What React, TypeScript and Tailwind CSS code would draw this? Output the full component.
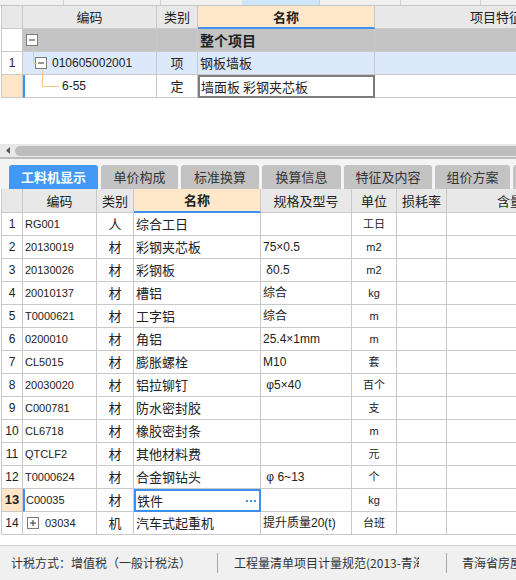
import React from 'react';

const cjk = "font-['Noto_Sans_CJK_SC',sans-serif]";
const latin = "font-['Liberation_Sans','Noto_Sans_CJK_SC',sans-serif]";

const rows: string[][] = [
    ['1', 'RG001', '人', '综合工日', '', '工日'],
    ['2', '20130019', '材', '彩钢夹芯板', '75×0.5', 'm2'],
    ['3', '20130026', '材', '彩钢板', ' δ0.5', 'm2'],
    ['4', '20010137', '材', '槽铝', '综合', 'kg'],
    ['5', 'T0000621', '材', '工字铝', '综合', 'm'],
    ['6', '0200010', '材', '角铝', '25.4×1mm', 'm'],
    ['7', 'CL5015', '材', '膨胀螺栓', 'M10', '套'],
    ['8', '20030020', '材', '铝拉铆钉', ' φ5×40', '百个'],
    ['9', 'C000781', '材', '防水密封胶', '', '支'],
    ['10', 'CL6718', '材', '橡胶密封条', '', 'm'],
    ['11', 'QTCLF2', '材', '其他材料费', '', '元'],
    ['12', 'T0000624', '材', '合金钢钻头', ' φ 6~13', '个'],
    ['13', 'C00035', '材', '铁件', '', 'kg'],
    ['14', '03034', '机', '汽车式起重机', '提升质量20(t)', '台班'],
];

const tabs = ['工料机显示', '单价构成', '标准换算', '换算信息', '特征及内容', '组价方案', ''];
const tabW = ['w-[89px]', 'w-[77px]', 'w-[78px]', 'w-[79px]', 'w-[88px]', 'w-[75px]', 'w-[80px]'];

const Box: React.FC<{ plus?: boolean }> = ({ plus }) => (
    <svg width="12" height="12" viewBox="0 0 12 12" className="shrink-0">
        <rect x="0.5" y="0.5" width="11" height="11" fill="#fff" stroke="#7a7a7a" />
        <line x1="3" y1="6" x2="9" y2="6" stroke="#333" strokeWidth="1" />
        {plus && <line x1="6" y1="3" x2="6" y2="9" stroke="#333" strokeWidth="1" />}
    </svg>
);

const App: React.FC = () => {
    const line = 'shrink-0 border-r border-b border-[#c9c9c9] box-border';
    return (
        <div className={`w-[516px] h-[580px] overflow-hidden bg-white flex flex-col text-[#222] ${cjk}`}>
            {/* top strip */}
            <div className="h-[6px] flex shrink-0 border-b border-[#c4c4c4] bg-[#f0f0f0]">
                <div className="w-[64px] shrink-0 border-r border-[#d0d0d0]" />
                <div className="w-[97px] shrink-0 border-r border-[#d0d0d0]" />
                <div className="w-[81px] shrink-0" />
                <div className="w-[78px] shrink-0 bg-[#cfe5fa] border-r border-[#d0d0d0]" />
                <div className="w-[81px] shrink-0 border-r border-[#d0d0d0]" />
                <div className="w-[80px] shrink-0 border-r border-[#d0d0d0]" />
            </div>

            {/* top table */}
            <div className="relative ml-px border-l border-[#c9c9c9] shrink-0">
                <div className="flex h-[23px] bg-[#e8e8e8] text-[13px]">
                    <div className={`w-[21px] ${line}`} />
                    <div className={`w-[134px] ${line} flex items-center justify-center`}>编码</div>
                    <div className={`w-[41px] ${line} flex items-center justify-center`}>类别</div>
                    <div className="w-[177px] shrink-0 border-r border-b-2 border-r-[#c9c9c9] border-b-[#3d8ff0] bg-[#fee8c9] flex items-center justify-center font-bold">名称</div>
                    <div className={`w-[200px] ${line} flex items-center pl-[95px] whitespace-nowrap`}>项目特征</div>
                </div>
                <div className="flex h-[23px] text-[13px]">
                    <div className={`w-[21px] ${line} bg-white`} />
                    <div className={`w-[134px] ${line} bg-[#c4c4c4] flex items-center pl-[3px]`}>
                        <Box />
                    </div>
                    <div className={`w-[41px] ${line} bg-[#c4c4c4]`} />
                    <div className={`w-[177px] ${line} bg-[#c4c4c4] flex items-center pl-[2px] font-bold text-[14px]`}>整个项目</div>
                    <div className={`w-[200px] ${line} bg-[#c4c4c4]`} />
                </div>
                <div className="flex h-[23px] text-[13px]">
                    <div className={`w-[21px] ${line} bg-white flex items-center justify-center ${latin} text-[12px]`}>1</div>
                    <div className={`w-[134px] ${line} bg-[#dce9fb] flex items-center pl-[12px] gap-[5px]`}>
                        <Box />
                        <span className={`${latin} text-[12px]`}>010605002001</span>
                    </div>
                    <div className={`w-[41px] ${line} bg-[#dce9fb] flex items-center justify-center`}>项</div>
                    <div className={`w-[177px] ${line} bg-[#dce9fb] flex items-center pl-[2px]`}>钢板墙板</div>
                    <div className={`w-[200px] ${line} bg-[#dce9fb]`} />
                </div>
                <div className="flex h-[23px] text-[13px]">
                    <div className={`w-[21px] ${line} bg-[#fee5c8]`} />
                    <div className={`w-[134px] ${line} border-l-2 border-l-[#3d8ff0] flex items-center pl-[37px]`}>
                        <span className={`${latin} text-[12px]`}>6-55</span>
                    </div>
                    <div className={`w-[41px] ${line} flex items-center justify-center`}>定</div>
                    <div className="w-[177px] shrink-0 border-2 border-[#7d7d7d] box-border flex items-center pl-[1px]">墙面板 彩钢夹芯板</div>
                    <div className={`w-[200px] ${line}`} />
                </div>
                <svg className="absolute left-[20px] top-[23px] pointer-events-none" width="60" height="70" viewBox="0 0 60 70">
                    <polyline points="11.5,18 11.5,34.5 15,34.5" fill="none" stroke="#fbc47e" strokeWidth="1" />
                    <polyline points="20.5,41 20.5,57.5 37,57.5" fill="none" stroke="#fbc47e" strokeWidth="1" />
                </svg>
            </div>

            <div className="h-[46px] shrink-0" />

            {/* scrollbar */}
            <div className="h-[13px] shrink-0 bg-[#e8e8e8] flex items-center">
                <svg width="14" height="13" viewBox="0 0 14 13" className="shrink-0">
                    <path d="M6 6.5 L10 3 L10 10 Z" fill="#555" />
                </svg>
                <div className="ml-px h-[10px] flex-1 rounded-l-full bg-[#bdbdbd]" />
            </div>
            <div className="h-[2px] shrink-0 bg-[#bdbdbd]" />

            {/* tabs */}
            <div className="h-[30px] shrink-0 bg-[#f4f4f4] flex items-end pl-[9px] gap-[3px]">
                {tabs.map((t, i) => (
                    <div
                        key={i}
                        className={`${tabW[i]} shrink-0 h-[24px] rounded-t-[3px] flex items-center justify-center text-[13px] ${i === 0 ? 'bg-[#4298f4] text-white font-bold' : 'bg-[#c3c3c3] text-[#333]'}`}
                    >
                        {t}
                    </div>
                ))}
            </div>

            {/* lower table */}
            <div className="ml-px border-l border-[#c9c9c9] shrink-0">
                <div className="flex h-[24px] bg-[#e8e8e8] text-[13px]">
                    <div className={`w-[21px] ${line}`} />
                    <div className={`w-[74px] ${line} flex items-center justify-center`}>编码</div>
                    <div className={`w-[37px] ${line} flex items-center justify-center`}>类别</div>
                    <div className="w-[127px] shrink-0 border-r border-b-2 border-r-[#c9c9c9] border-b-[#3d8ff0] bg-[#fee8c9] flex items-center justify-center font-bold">名称</div>
                    <div className={`w-[91px] ${line} flex items-center justify-center`}>规格及型号</div>
                    <div className={`w-[45px] ${line} flex items-center justify-center`}>单位</div>
                    <div className={`w-[50px] ${line} flex items-center justify-center`}>损耗率</div>
                    <div className={`w-[100px] ${line} flex items-center pl-[50px] whitespace-nowrap`}>含量</div>
                </div>
                {rows.map((r, i) => {
                    const sel = r[0] === '13';
                    return (
                        <div key={i} className="flex h-[23px] text-[12px]">
                            <div className={`w-[21px] ${line} flex items-center justify-center ${latin} ${sel ? 'bg-[#fee5c8] font-bold text-[13px]' : ''}`}>{r[0]}</div>
                            <div className={`w-[74px] ${line} flex items-center ${sel ? 'border-l-2 border-l-[#3d8ff0] pl-px' : 'pl-[2px]'} ${latin} text-[11px]`}>
                                {r[0] === '14' ? (
                                    <span className="flex items-center gap-[6px] pl-[2px]"><Box plus /><span>{r[1]}</span></span>
                                ) : r[1]}
                            </div>
                            <div className={`w-[37px] ${line} flex items-center justify-center text-[13px]`}>{r[2]}</div>
                            {sel ? (
                                <div className="w-[127px] shrink-0 border-2 border-[#3d8ff0] box-border flex items-center justify-between pl-[1px] pr-[3px] text-[13px]">
                                    <span>{r[3]}</span>
                                    <span className="flex gap-[2px]">
                                        <span className="w-[2px] h-[2px] bg-[#3d8ff0]" />
                                        <span className="w-[2px] h-[2px] bg-[#3d8ff0]" />
                                        <span className="w-[2px] h-[2px] bg-[#3d8ff0]" />
                                    </span>
                                </div>
                            ) : (
                                <div className={`w-[127px] ${line} flex items-center pl-[2px] text-[13px]`}>{r[3]}</div>
                            )}
                            <div className={`w-[91px] ${line} flex items-center pl-[2px] whitespace-pre ${latin} text-[12px]`}>{r[4]}</div>
                            <div className={`w-[45px] ${line} flex items-center justify-center ${latin} text-[11px]`}>{r[5]}</div>
                            <div className={`w-[50px] ${line}`} />
                            <div className={`w-[100px] ${line}`} />
                        </div>
                    );
                })}
            </div>

            <div className="flex-1" />

            {/* status bar */}
            <div className="h-[35px] shrink-0 border-t border-[#cfcfcf] bg-[#f0f0f0] flex items-center text-[12px] text-[#333] whitespace-nowrap">
                <span className="pl-[11px] w-[217px] shrink-0">计税方式：增值税（一般计税法）</span>
                <span className="h-[20px] w-px bg-[#a8a8a8] shrink-0" />
                <span className="pl-[16px] w-[201px] shrink-0 overflow-hidden">工程量清单项目计量规范(2013-青海)</span>
                <span className="h-[20px] w-px bg-[#a8a8a8] shrink-0 ml-[27px]" />
                <span className="pl-[15px]">青海省房屋建筑</span>
            </div>
        </div>
    );
};

export default App;
